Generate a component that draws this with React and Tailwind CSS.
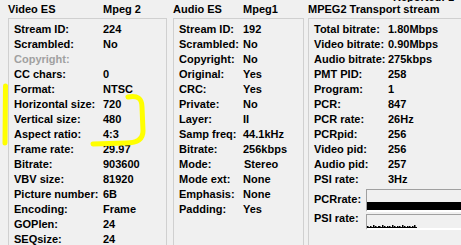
import React from "react";

const video = [
  ["Stream ID:", "224"],
  ["Scrambled:", "No"],
  ["Copyright:", "", true],
  ["CC chars:", "0"],
  ["Format:", "NTSC"],
  ["Horizontal size:", "720"],
  ["Vertical size:", "480"],
  ["Aspect ratio:", "4:3"],
  ["Frame rate:", "29.97"],
  ["Bitrate:", "903600"],
  ["VBV size:", "81920"],
  ["Picture number:", "6B"],
  ["Encoding:", "Frame"],
  ["GOPlen:", "24"],
  ["SEQsize:", "24"],
];

const audio = [
  ["Stream ID:", "192"],
  ["Scrambled:", "No"],
  ["Copyright:", "No"],
  ["Original:", "Yes"],
  ["CRC:", "Yes"],
  ["Private:", "No"],
  ["Layer:", "II"],
  ["Samp freq:", "44.1kHz"],
  ["Bitrate:", "256kbps"],
  ["Mode:", "Stereo"],
  ["Mode ext:", "None"],
  ["Emphasis:", "None"],
  ["Padding:", "Yes"],
];

const ts = [
  ["Total bitrate:", "1.80Mbps"],
  ["Video bitrate:", "0.90Mbps"],
  ["Audio bitrate:", "275kbps"],
  ["PMT PID:", "258"],
  ["Program:", "1"],
  ["PCR:", "847"],
  ["PCR rate:", "26Hz"],
  ["PCRpid:", "256"],
  ["Video pid:", "256"],
  ["Audio pid:", "257"],
  ["PSI rate:", "3Hz"],
];

function Rows({ rows, labelW }) {
  return (
    <div className="flex flex-col">
      {rows.map(([k, v, dis]) => (
        <div key={k} className="flex h-[15px] leading-[15px] whitespace-nowrap">
          <span className={labelW + (dis ? " text-[#a0a0a0]" : "")}>{k}</span>
          <span className={v === "Stereo" ? "ml-[1px]" : ""}>{v}</span>
        </div>
      ))}
    </div>
  );
}

const psiBars = [
  [0, 2], [2, 1], [3, 2], [5, 1], [6, 3], [8, 2], [9, 1], [11, 2], [12, 2], [14, 1],
  [15, 3], [17, 2], [19, 1], [20, 2], [22, 2], [24, 1], [25, 3], [27, 2], [28, 1],
  [30, 2], [32, 2], [33, 1], [35, 3], [37, 2], [38, 1], [40, 2], [42, 2], [44, 1],
  [45, 2], [47, 3], [48, 1],
];

export default function App() {
  return (
    <div
      className="relative w-[461px] h-[245px] overflow-hidden bg-[#f0f0f0] text-black text-[11px] font-bold"
      style={{ fontFamily: '"Liberation Sans", Arial, sans-serif' }}
    >
      <div className="flex pl-[8px]">
        {/* Video ES */}
        <div className="flex flex-col w-[159px] shrink-0">
          <div className="flex h-[18px] pt-[2px] leading-[15px]">
            <span className="w-[95px]">Video ES</span>
            <span>Mpeg 2</span>
          </div>
          <div className="border border-[#d0d0d0] h-[260px] pt-[3px] pl-[5px]">
            <Rows rows={video} labelW="w-[89px]" />
          </div>
        </div>

        {/* Audio ES */}
        <div className="flex flex-col w-[131px] shrink-0 ml-[6px]">
          <div className="flex h-[18px] pt-[2px] leading-[15px]">
            <span className="w-[70px]">Audio ES</span>
            <span>Mpeg1</span>
          </div>
          <div className="border border-[#d0d0d0] h-[260px] pt-[3px] pl-[5px]">
            <Rows rows={audio} labelW="w-[64px]" />
          </div>
        </div>

        {/* Transport stream */}
        <div className="flex flex-col w-[170px] shrink-0 ml-[4px]">
          <div className="h-[2px] overflow-hidden">
            <div className="-mt-[10px] pl-[85px] leading-[15px] whitespace-nowrap">Reported: 1</div>
          </div>
          <div className="h-[16px] leading-[15px] whitespace-nowrap">MPEG2 Transport stream</div>
          <div className="border border-[#d0d0d0] h-[260px] pt-[3px] pl-[5px]">
            <Rows rows={ts} labelW="w-[74px]" />
            <div className="flex items-start mt-[2px]">
              <span className="w-[52px] leading-[15px] mt-[3px]">PCRrate:</span>
              <div className="flex-1 h-[23px] border-t border-l border-[#a0a0a0] border-b-2 border-b-white flex flex-col justify-end">
                <div className="h-[8px] bg-black" />
              </div>
            </div>
            <div className="flex items-start mt-[2px]">
              <span className="w-[52px] leading-[15px] -mt-[3px]">PSI rate:</span>
              <div className="flex-1 h-[16px] border-t border-l border-[#a0a0a0] border-b-2 border-b-white relative">
                <svg width="60" height="14" className="block">
                  {psiBars.map(([x, h], i) => (
                    <rect key={i} x={x} y={13 - h} width="1.5" height={h} fill="#000" />
                  ))}
                  <rect x="0" y="12" width="50" height="1" fill="#000" />
                </svg>
              </div>
            </div>
          </div>
        </div>
      </div>

      {/* yellow hand-drawn marker */}
      <svg className="absolute left-0 top-0 pointer-events-none" width="461" height="245">
        <path d="M5.5 86 L5 143" stroke="#ffff00" strokeWidth="5" strokeLinecap="round" fill="none" />
        <path
          d="M128 97 Q142 94 142 107 L143 131 Q143 143 126 143 L93 144"
          stroke="#ffff00"
          strokeWidth="5"
          strokeLinecap="round"
          strokeLinejoin="round"
          fill="none"
        />
      </svg>
    </div>
  );
}
